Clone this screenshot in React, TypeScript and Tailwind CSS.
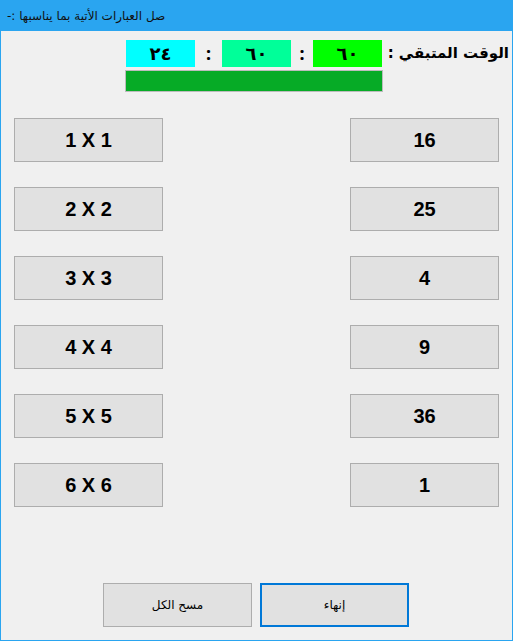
import React from "react";

/* Matching game window — pairs of expressions and results */

const left = ["1 X 1", "2 X 2", "3 X 3", "4 X 4", "5 X 5", "6 X 6"];
const right = ["16", "25", "4", "9", "36", "1"];

const arabic = "font-['DejaVu_Sans',_'Noto_Sans',_sans-serif]";

function MatchButton({ label }: { label: string }) {
  return (
    <button
      type="button"
      className="h-[44px] w-[149px] border border-[#adadad] bg-[#e1e1e1] text-[20px] font-bold text-black font-['Liberation_Sans',_Arial,_sans-serif]"
    >
      {label}
    </button>
  );
}

export default function App() {
  return (
    <div className="flex h-[641px] w-[513px] flex-col border-x border-b border-[#2aa5f0] bg-[#f0f0f0]">
      {/* Title bar */}
      <div className="flex h-[31px] shrink-0 items-center bg-[#2aa5f0] pl-[6px]">
        <span dir="rtl" className={`text-[12px] text-[#111] ${arabic}`}>
          صل العبارات الأتية بما يناسبها :-
        </span>
      </div>

      {/* Timer */}
      <div className="pl-[125px] pt-[9px]">
        <div className="flex items-center">
          <div className={`flex h-[27px] w-[69px] items-center justify-center bg-[#00ffff] text-[18px] font-bold ${arabic}`}>
            ٢٤
          </div>
          <div className="flex w-[27px] justify-center text-[18px] font-bold">:</div>
          <div className={`flex h-[27px] w-[69px] items-center justify-center bg-[#00ff99] text-[18px] font-bold ${arabic}`}>
            ٦٠
          </div>
          <div className="flex w-[22px] justify-center text-[18px] font-bold">:</div>
          <div className={`flex h-[27px] w-[69px] items-center justify-center bg-[#00ff00] text-[18px] font-bold ${arabic}`}>
            ٦٠
          </div>
          <div dir="rtl" className={`ml-[11px] w-[116px] whitespace-nowrap text-[15px] font-semibold text-black ${arabic}`}>
            الوقت المتبقي :
          </div>
        </div>
        <div className="-ml-px mt-[3px] h-[22px] w-[258px] border border-[#bcbcbc] bg-[#06ab26]" />
      </div>

      {/* Pairs */}
      <div className="flex justify-between pl-[13px] pr-[13px] pt-[26px]">
        <div className="flex flex-col gap-[25px]">
          {left.map((l) => (
            <MatchButton key={l} label={l} />
          ))}
        </div>
        <div className="flex flex-col gap-[25px]">
          {right.map((r) => (
            <MatchButton key={r} label={r} />
          ))}
        </div>
      </div>

      {/* Actions */}
      <div className="mt-auto flex gap-[8px] pb-[13px] pl-[102px]">
        <button
          type="button"
          className={`h-[44px] w-[149px] border border-[#adadad] bg-[#e1e1e1] text-[12px] text-black ${arabic}`}
        >
          مسح الكل
        </button>
        <button
          type="button"
          className={`h-[44px] w-[149px] border-2 border-[#0078d7] bg-[#e1e1e1] text-[12px] text-black ${arabic}`}
        >
          إنهاء
        </button>
      </div>
    </div>
  );
}
